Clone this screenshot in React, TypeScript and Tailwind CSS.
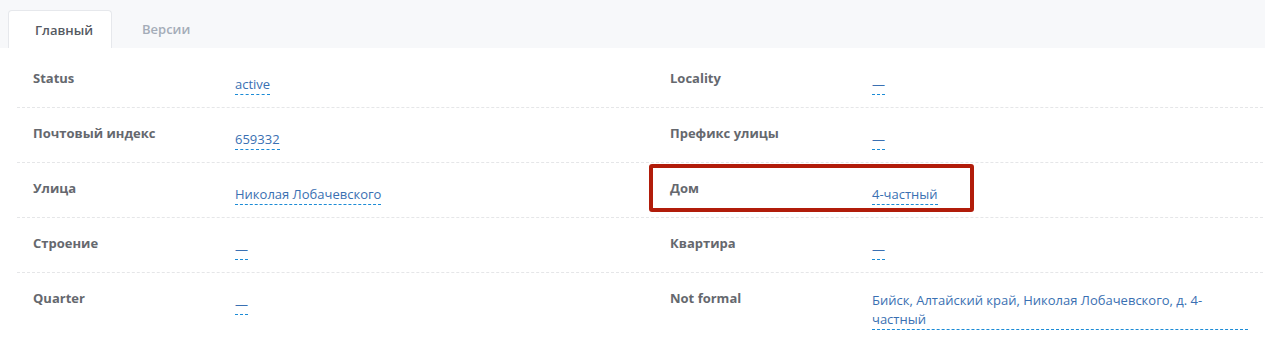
import React from "react";

type Field = { label: string; value: string };

const rows: [Field, Field][] = [
  [
    { label: "Status", value: "active" },
    { label: "Locality", value: "—" },
  ],
  [
    { label: "Почтовый индекс", value: "659332" },
    { label: "Префикс улицы", value: "—" },
  ],
  [
    { label: "Улица", value: "Николая Лобачевского" },
    { label: "Дом", value: "4-частный" },
  ],
  [
    { label: "Строение", value: "—" },
    { label: "Квартира", value: "—" },
  ],
  [
    { label: "Quarter", value: "—" },
    { label: "Not formal", value: "Бийск, Алтайский край, Николая Лобачевского, д. 4-частный" },
  ],
];

const Cell = ({ label, value, highlight }: Field & { highlight?: boolean }) => (
  <div className="relative flex pl-4">
    {highlight && (
      <div className="absolute left-[-5px] top-[1px] h-[48px] w-[325px] rounded-[3px] border-4 border-[#b11c0a]" />
    )}
    <div className="w-[202px] shrink-0 pt-[15px] text-[13px] leading-5 font-bold text-[#65686e]">
      {label}
    </div>
    <div className="min-w-0 flex-1 pt-[18px] pr-[15px]">
      <span className="inline-block border-b border-dashed border-[#1b8bd6] text-[13px] leading-[19px] text-[#3a70b2]">
        {value}
      </span>
    </div>
  </div>
);

export default function App() {
  return (
    <div className="w-[1265px] h-[344px] bg-white font-['Open_Sans',sans-serif] overflow-hidden">
      <div className="flex h-12 items-end bg-[#f7f8fa] pl-2">
        <div className="flex h-[38px] w-[104px] items-center rounded-t-[4px] border border-b-0 border-[#e6e8ec] bg-white pl-[26px] pt-[2px] text-[13px] font-semibold text-[#555a62]">
          Главный
        </div>
        <div className="flex h-[38px] items-center pl-[30px] pt-[2px] text-[13px] font-semibold text-[#a4acb8]">
          Версии
        </div>
      </div>
      <div className="pl-[17px] pr-[2px] pt-[5px]">
        {rows.map(([l, r], i) => (
          <div
            key={i}
            className={
              i < rows.length - 1
                ? "grid h-[55px] grid-cols-[637px_1fr] border-b border-dashed border-[#e5e6e8]"
                : "grid grid-cols-[637px_1fr]"
            }
          >
            <Cell {...l} />
            <Cell {...r} highlight={r.label === "Дом"} />
          </div>
        ))}
      </div>
    </div>
  );
}
